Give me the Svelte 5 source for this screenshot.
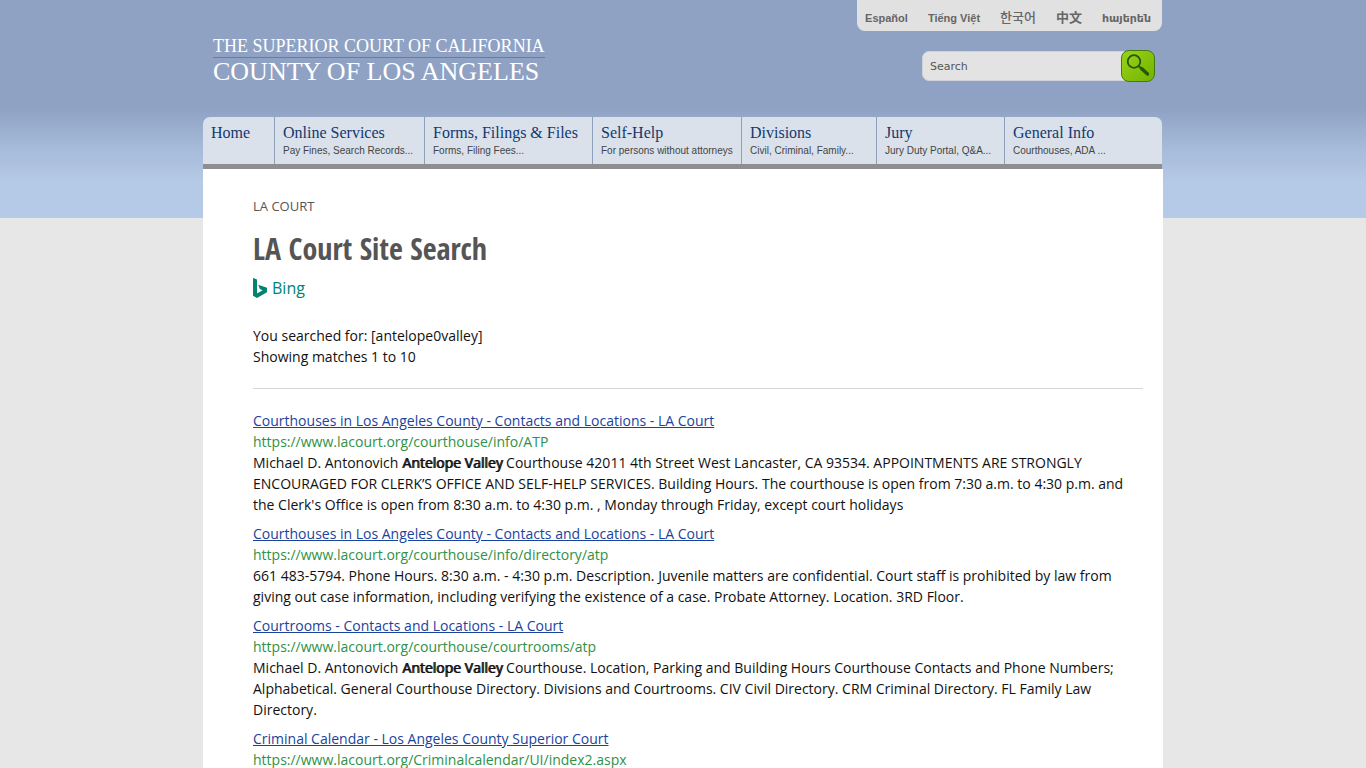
<script lang="ts">
  type Part = { text: string; strong?: boolean };

  const languages = [
    { code: 'es', label: 'Español' },
    { code: 'vi', label: 'Tiếng Việt' },
    { code: 'ko', label: '한국어' },
    { code: 'zh', label: '中文' },
    { code: 'hy', label: 'հայերեն' },
  ];

  const sections = [
    { title: 'Home', note: '' },
    { title: 'Online Services', note: 'Pay Fines, Search Records...' },
    { title: 'Forms, Filings & Files', note: 'Forms, Filing Fees...' },
    { title: 'Self-Help', note: 'For persons without attorneys' },
    { title: 'Divisions', note: 'Civil, Criminal, Family...' },
    { title: 'Jury', note: 'Jury Duty Portal, Q&A...' },
    { title: 'General Info', note: 'Courthouses, ADA ...' },
  ];

  const results: { title: string; url: string; snippet: Part[] }[] = [
    {
      title: 'Courthouses in Los Angeles County - Contacts and Locations - LA Court',
      url: 'https://www.lacourt.org/courthouse/info/ATP',
      snippet: [
        { text: 'Michael D. Antonovich ' },
        { text: 'Antelope Valley', strong: true },
        {
          text: " Courthouse 42011 4th Street West Lancaster, CA 93534. APPOINTMENTS ARE STRONGLY ENCOURAGED FOR CLERK’S OFFICE AND SELF-HELP SERVICES. Building Hours. The courthouse is open from 7:30 a.m. to 4:30 p.m. and the Clerk's Office is open from 8:30 a.m. to 4:30 p.m. , Monday through Friday, except court holidays",
        },
      ],
    },
    {
      title: 'Courthouses in Los Angeles County - Contacts and Locations - LA Court',
      url: 'https://www.lacourt.org/courthouse/info/directory/atp',
      snippet: [
        {
          text: '661 483-5794. Phone Hours. 8:30 a.m. - 4:30 p.m. Description. Juvenile matters are confidential. Court staff is prohibited by law from giving out case information, including verifying the existence of a case. Probate Attorney. Location. 3RD Floor.',
        },
      ],
    },
    {
      title: 'Courtrooms - Contacts and Locations - LA Court',
      url: 'https://www.lacourt.org/courthouse/courtrooms/atp',
      snippet: [
        { text: 'Michael D. Antonovich ' },
        { text: 'Antelope Valley', strong: true },
        {
          text: ' Courthouse. Location, Parking and Building Hours Courthouse Contacts and Phone Numbers; Alphabetical. General Courthouse Directory. Divisions and Courtrooms. CIV Civil Directory. CRM Criminal Directory. FL Family Law Directory.',
        },
      ],
    },
    {
      title: 'Criminal Calendar - Los Angeles County Superior Court',
      url: 'https://www.lacourt.org/Criminalcalendar/UI/index2.aspx',
      snippet: [],
    },
  ];

  let query = $state('');
</script>

<div class="page">
  <div class="wrap">
    <header>
      <a class="brand" href="#home">
        <span class="court">THE SUPERIOR COURT OF CALIFORNIA</span>
        <span class="county">COUNTY OF LOS ANGELES</span>
      </a>
      <div class="tools">
        <div class="languages">
          {#each languages as { code, label }}
            <a href="#{code}" lang={code}>{label}</a>
          {/each}
        </div>
        <form class="search" onsubmit={(e) => e.preventDefault()}>
          <input type="text" aria-label="Search" placeholder="Search" bind:value={query} />
          <button type="submit" aria-label="Go">
            <svg viewBox="0 0 32 30" width="32" height="30" aria-hidden="true">
              <circle cx="12" cy="10.500" r="6.300" fill="none" stroke="#28560b" stroke-width="1.800" />
              <path d="M16.500 15l3 2.500" stroke="#28560b" stroke-width="2" />
              <path d="M19.500 17.500l6 5.500" stroke="#28560b" stroke-width="3.400" stroke-linecap="round" />
            </svg>
          </button>
        </form>
      </div>
    </header>

    <nav>
      {#each sections as { title, note }}
        <a href="#{title.toLowerCase().replace(/\W+/g, '-')}">
          <span class="title">{title}</span>
          {#if note}
            <span class="note">{note}</span>
          {/if}
        </a>
      {/each}
    </nav>

    <main>
      <a class="crumb" href="#home">LA COURT</a>
      <h1>LA Court Site Search</h1>
      <div class="bing">
        <svg viewBox="0 0 14 20" width="14" height="20" aria-hidden="true">
          <path d="M0 0l4 1.400v14l5.600-3.200-2.700-1.300L5.200 6.700 14 9.800v4.400L4 20l-4-2.200z" fill="#008373" />
        </svg>
        <span>Bing</span>
      </div>

      <p class="summary">
        You searched for: [antelope0valley]<br />
        Showing matches 1 to 10
      </p>
      <hr />

      {#each results as result}
        <article>
          <a class="link" href={result.url}>{result.title}</a>
          <div class="url">{result.url}</div>
          {#if result.snippet.length}
            <p>
              {#each result.snippet as part}{#if part.strong}<strong>{part.text}</strong>{:else}{part.text}{/if}{/each}
            </p>
          {/if}
        </article>
      {/each}
    </main>
  </div>
</div>

<style>
  :global(body) {
    margin: 0;
    background: #e7e7e7;
  }

  .page {
    min-height: 100vh;
    display: flex;
    justify-content: center;
    background: linear-gradient(#8fa2c4 0, #8fa2c4 108px, #a8bcdb 152px, #b5cae6 182px, #b5cae6 218px) no-repeat 0 0 / 100% 218px;
    font-family: 'Open Sans', sans-serif;
    font-size: 14px;
    line-height: 21px;
    color: #111;
  }

  .wrap {
    width: 100%;
    max-width: 960px;
    display: flex;
    flex-direction: column;
  }

  header {
    display: flex;
    justify-content: space-between;
    align-items: flex-start;
    padding-bottom: 35px;
  }

  .brand {
    margin: 35px 0 -8px 10px;
    color: #fff;
    font-family: 'Liberation Serif', serif;
    text-decoration: none;
    white-space: nowrap;
  }

  .court,
  .county {
    display: block;
  }

  .court {
    font-size: 18px;
    line-height: 22px;
    border-bottom: 1px solid #6676cc;
  }

  .county {
    font-size: 26px;
    line-height: 28px;
  }

  .tools {
    display: flex;
    flex-direction: column;
    align-items: flex-end;
    gap: 19px;
  }

  .languages {
    display: flex;
    align-items: center;
    gap: 20px;
    height: 27px;
    padding: 4px 11px 0 8px;
    margin-right: 1px;
    border-radius: 0 0 8px 8px;
    background: #e1e1e1;
  }

  .languages a {
    color: #666;
    font: bold 11px/16px 'Liberation Sans', 'Noto Sans CJK KR', 'DejaVu Sans', sans-serif;
    text-decoration: none;
    white-space: nowrap;
  }

  .languages a:lang(ko),
  .languages a:lang(zh) {
    font-size: 13px;
  }

  .languages a:lang(ko) {
    font-weight: 500;
  }

  .search {
    display: flex;
    align-items: center;
    margin-right: 8px;
  }

  .search input {
    box-sizing: border-box;
    width: 203px;
    height: 30px;
    margin-right: -4px;
    padding: 0 7px;
    border: 1px solid #cfd3da;
    border-radius: 7px 0 0 7px;
    background: #e3e3e3;
    color: #555;
    font: 11px 'DejaVu Sans', sans-serif;
  }

  .search input::placeholder {
    color: #555;
    opacity: 1;
  }

  .search button {
    position: relative;
    box-sizing: border-box;
    width: 34px;
    height: 32px;
    padding: 0;
    border: 1px solid #44790f;
    border-radius: 8px;
    background: linear-gradient(135deg, #9bd21a, #72b300);
    cursor: pointer;
  }

  .search svg {
    display: block;
  }

  nav {
    display: grid;
    grid-template-columns: 72fr 150fr 168fr 149fr 135fr 128fr 157fr;
    margin-right: 1px;
    border-bottom: 5px solid #8e8e8e;
    background: #dae1eb;
    border-radius: 7px 7px 0 0;
  }

  nav a {
    height: 39px;
    padding: 8px 0 0 8px;
    border-right: 1px solid #8fa0bc;
    text-decoration: none;
    white-space: nowrap;
  }

  nav a:last-child {
    border-right: 0;
  }

  .title,
  .note {
    display: block;
  }

  .title {
    color: #13386f;
    font: 16px/16px 'Liberation Serif', serif;
  }

  .note {
    color: #444;
    font: 10px/20px 'Liberation Sans', sans-serif;
  }

  main {
    flex: 1;
    padding: 27px 20px 0 50px;
    background: #fff;
  }

  .crumb {
    display: block;
    color: #555;
    font-size: 13px;
    font-weight: 500;
    text-decoration: none;
  }

  h1 {
    margin: 12px 0 9px;
    color: #555;
    font: bold 30px/40px 'Open Sans Condensed', sans-serif;
  }

  .bing {
    display: flex;
    align-items: center;
    gap: 5px;
    color: #008373;
    font-size: 16px;
    line-height: 20px;
  }

  .summary {
    margin: 27px 0 21px;
  }

  hr {
    margin: 0 0 21px;
    border: 0;
    border-top: 1px solid #d6d6d6;
  }

  article {
    margin-bottom: 8px;
  }

  article:last-child {
    margin-bottom: 0;
  }

  article p {
    margin: 0;
  }

  strong {
    font-weight: 400;
    text-shadow: 1px 0 currentColor;
  }

  .link {
    color: #1b439c;
  }

  .url {
    color: #2f9147;
  }
</style>
